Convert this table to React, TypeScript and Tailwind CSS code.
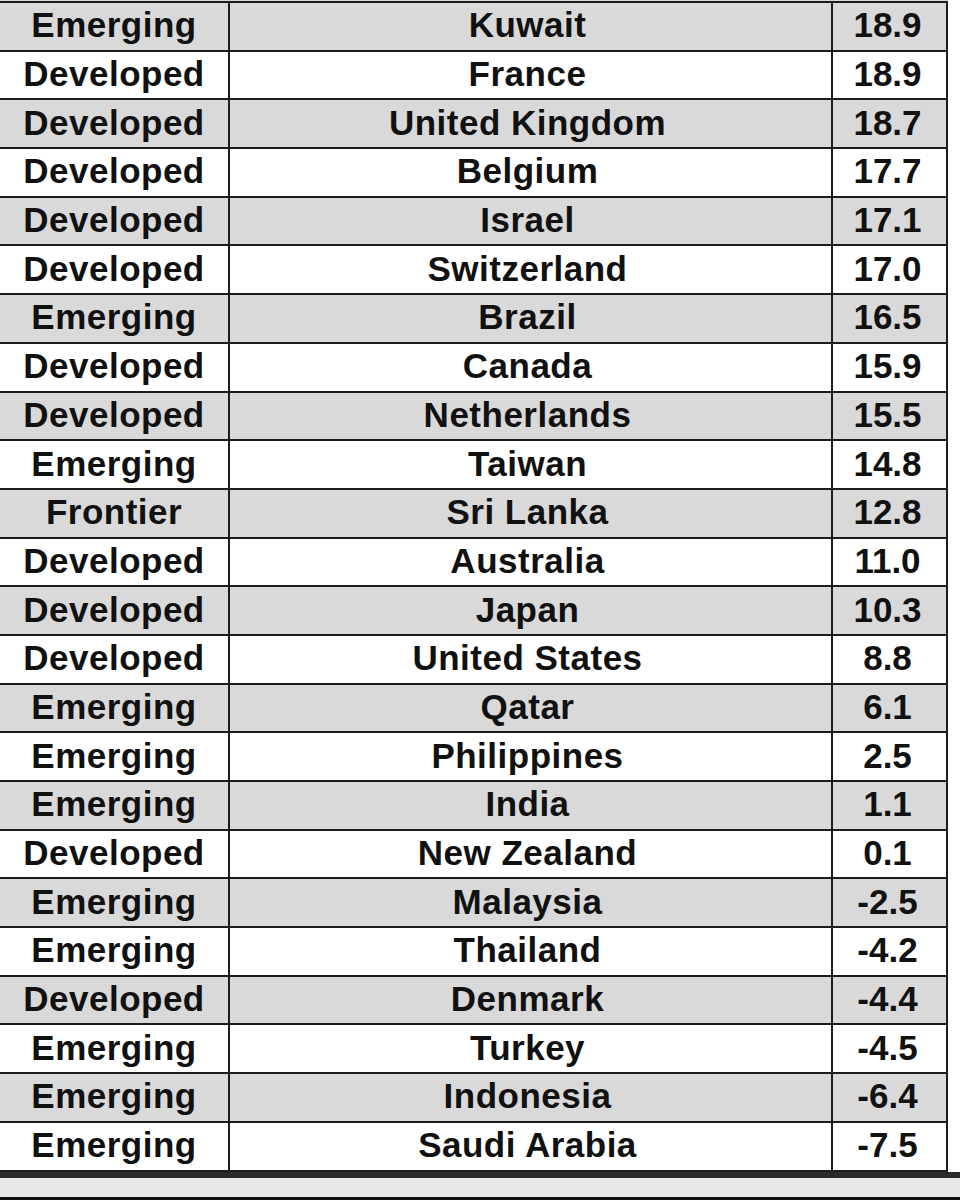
const rows: [string, string, string][] = [
  ["Emerging", "Kuwait", "18.9"],
  ["Developed", "France", "18.9"],
  ["Developed", "United Kingdom", "18.7"],
  ["Developed", "Belgium", "17.7"],
  ["Developed", "Israel", "17.1"],
  ["Developed", "Switzerland", "17.0"],
  ["Emerging", "Brazil", "16.5"],
  ["Developed", "Canada", "15.9"],
  ["Developed", "Netherlands", "15.5"],
  ["Emerging", "Taiwan", "14.8"],
  ["Frontier", "Sri Lanka", "12.8"],
  ["Developed", "Australia", "11.0"],
  ["Developed", "Japan", "10.3"],
  ["Developed", "United States", "8.8"],
  ["Emerging", "Qatar", "6.1"],
  ["Emerging", "Philippines", "2.5"],
  ["Emerging", "India", "1.1"],
  ["Developed", "New Zealand", "0.1"],
  ["Emerging", "Malaysia", "-2.5"],
  ["Emerging", "Thailand", "-4.2"],
  ["Developed", "Denmark", "-4.4"],
  ["Emerging", "Turkey", "-4.5"],
  ["Emerging", "Indonesia", "-6.4"],
  ["Emerging", "Saudi Arabia", "-7.5"],
];

export default function App() {
  return (
    <div className="w-[960px] h-[1200px] bg-white overflow-hidden font-['Liberation_Sans',Arial,sans-serif] font-bold text-[#111] text-[35px] leading-none">
      <div className="h-px w-[948px] bg-[#d9d9d9]" />
      <div className="w-[948px] border-t-2 border-r-2 border-[#1c1c1c]">
        {rows.map(([kind, country, value], i) => (
          <div
            key={country}
            className={`flex h-[48.7px] border-b-2 border-[#1c1c1c] ${i % 2 === 0 ? "bg-[#d9d9d9]" : "bg-white"}`}
          >
            <div className="w-[230px] shrink-0 border-r-2 border-[#1c1c1c] flex items-center justify-center pb-[3px] tracking-[0.5px]">
              {kind}
            </div>
            <div className="w-[603px] shrink-0 border-r-2 border-[#1c1c1c] flex items-center justify-center pb-[3px] pr-[6px] tracking-[0.5px]">
              {country}
            </div>
            <div className="flex-1 flex items-center justify-center pb-[3px] pr-[4px]">
              {value}
            </div>
          </div>
        ))}
      </div>
      <div className="h-[6px] bg-[#2a2a2a]" />
      <div className="h-[19px] bg-[#e8e8e8]" />
      <div className="h-[4px] bg-[#111]" />
    </div>
  );
}
